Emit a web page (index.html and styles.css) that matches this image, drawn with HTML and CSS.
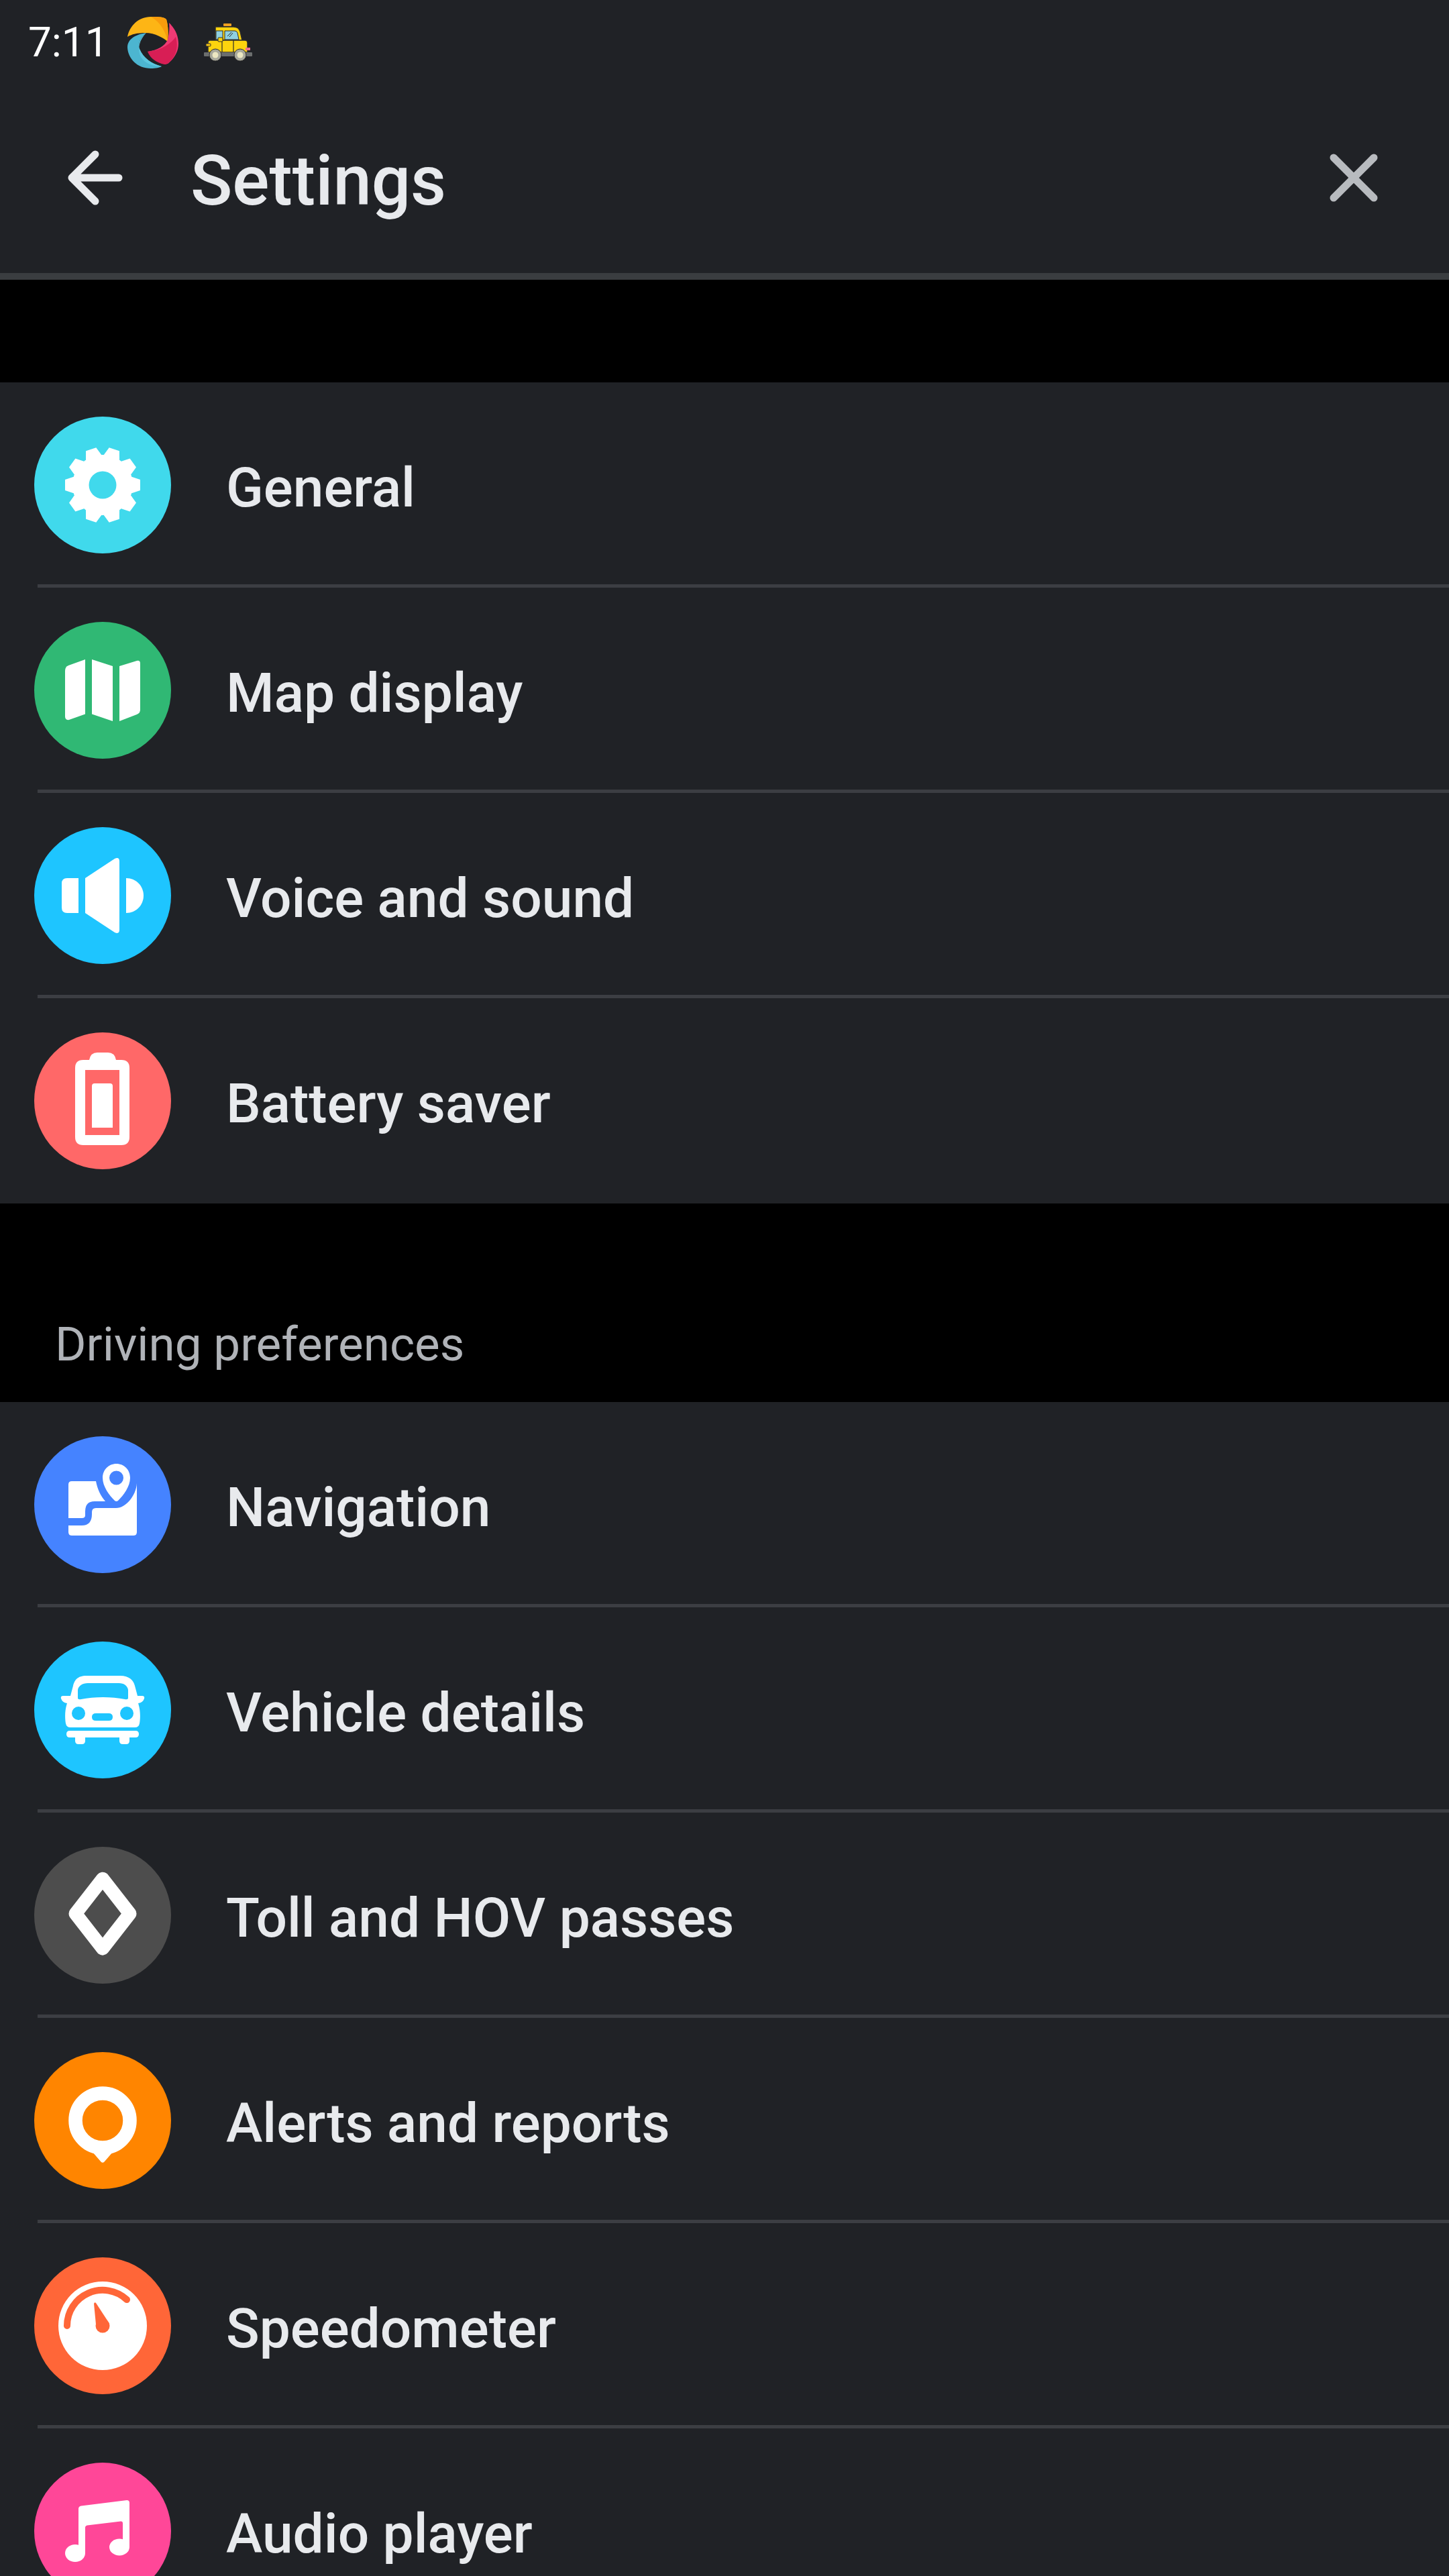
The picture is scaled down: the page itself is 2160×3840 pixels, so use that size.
FILE: index.html
```html
<!DOCTYPE html>
<html lang="en">

<head>
    <meta charset="UTF-8">
    <meta name="viewport" content="width=device-width, initial-scale=1.0">
    <title>Settings</title>
    <link rel="stylesheet" href="styles.css">
</head>

<body>
    <div class="screen">
        <header class="app-header">
            <div class="status-bar">
                <span class="clock">7:11</span>
                <svg class="swirl" viewBox="0 0 76 77">
                    <path fill="#fdb515" d="M0 30C3 14 16 0 35 0C46 0 55 0 58 4C61 14 61 26 60 37C54 32 42 24 26 24C15 24 6 26 0 30Z" />
                    <path fill="#f99c0c" d="M35 0C46 0 55 0 58 4C61 14 61 26 60 37C58 25 50 8 35 0Z" />
                    <path fill="#4cb5d0" d="M28 24C14 26 0 32 0 46C1 62 14 77 35 77C42 77 48 76 51 74C36 70 24 62 18 48C15 39 20 30 28 24Z" />
                    <path fill="#5cc6de" d="M28 24C18 34 14 48 20 60C25 69 38 74 51 74C36 70 24 62 18 48C15 39 20 30 28 24Z" />
                    <path fill="#f03a74" d="M62 9C72 18 76 30 76 40C76 52 70 62 60 70C52 64 40 58 30 52C44 50 56 44 60 34C62 26 63 17 62 9Z" />
                    <path fill="#d81e55" d="M30 52C44 50 60 46 72 30C76 44 74 58 60 70C58 71 56 71 55 71C44 69 34 62 30 52Z" />
                </svg>
                <svg class="taxi" viewBox="0 0 72 56">
                    <rect x="29" y="0" width="12" height="4" rx="1" fill="#f0a020" />
                    <path fill="#fdd40e" stroke="#2c2c2c" stroke-width="1.5" d="M17 5H44Q52 5 54 12L57 25H17Z" />
                    <rect x="18" y="11" width="10" height="13" fill="#8fd0e0" stroke="#2c2c2c" />
                    <path fill="#8fd0e0" stroke="#2c2c2c" d="M31 11H46Q49 11 50 14L52 24H31Z" />
                    <path stroke="#2c2c2c" stroke-width="1" d="M35 19L41 13M38 20L43 14" />
                    <path fill="#fdd40e" stroke="#2c2c2c" stroke-width="1.5" d="M9 25H61Q65 25 65 29V43H6V28Q6 25 9 25Z" />
                    <path stroke="#2c2c2c" stroke-width="1.2" d="M27 25V43M44 25V43" />
                    <rect x="21" y="21" width="7" height="6" rx="1" fill="#fdd40e" stroke="#2c2c2c" />
                    <rect x="3" y="30" width="7" height="4" rx="1" fill="#f6c514" stroke="#2c2c2c" />
                    <rect x="62" y="36" width="7" height="4" fill="#ef6e8d" />
                    <rect x="0" y="43" width="72" height="6" rx="1" fill="#6b6e6e" />
                    <circle cx="17" cy="47" r="9" fill="#a9a99c" stroke="#2c2c2c" />
                    <circle cx="17" cy="47" r="4.5" fill="#ece7c2" />
                    <circle cx="54" cy="47" r="9" fill="#a9a99c" stroke="#2c2c2c" />
                    <circle cx="54" cy="47" r="4.5" fill="#ece7c2" />
                </svg>
            </div>
            <div class="toolbar">
                <svg class="back-icon" viewBox="0 0 82 82">
                    <path d="M76 41H6M41 6L6 41L41 76" />
                </svg>
                <h1 class="title">Settings</h1>
                <svg class="close-icon" viewBox="0 0 72 72">
                    <path d="M6 6L66 66M66 6L6 66" />
                </svg>
            </div>
        </header>

        <section class="group group-first">
            <div class="row">
                <span class="badge badge-general">
                    <svg viewBox="0 0 204 204">
                        <g fill="#fff">
                            <polygon points="46,94 58,90 146,90 158,94 158,110 146,114 58,114 46,110" />
                            <polygon points="46,94 58,90 146,90 158,94 158,110 146,114 58,114 46,110" transform="rotate(36 102 102)" />
                            <polygon points="46,94 58,90 146,90 158,94 158,110 146,114 58,114 46,110" transform="rotate(72 102 102)" />
                            <polygon points="46,94 58,90 146,90 158,94 158,110 146,114 58,114 46,110" transform="rotate(108 102 102)" />
                            <polygon points="46,94 58,90 146,90 158,94 158,110 146,114 58,114 46,110" transform="rotate(144 102 102)" />
                            <circle cx="102" cy="102" r="45" />
                        </g>
                        <circle cx="102" cy="102" r="20.5" fill="#40d9ec" />
                    </svg>
                </span>
                <span class="label">General</span>
            </div>
            <div class="row">
                <span class="badge badge-map">
                    <svg viewBox="0 0 204 204">
                        <g fill="#fff">
                            <path d="M46 73Q46 67 51 65L76 56V137.500L52 146Q46 147 46 141Z" />
                            <path d="M86 56L117 66V148L86 137.500Z" />
                            <path d="M127 66L153 58Q158 57 158 62V131Q158 136 153 138L127 148Z" />
                        </g>
                    </svg>
                </span>
                <span class="label">Map display</span>
            </div>
            <div class="row">
                <span class="badge badge-sound">
                    <svg viewBox="0 0 204 204">
                        <g fill="#fff">
                            <path d="M66 76V128H49Q41 128 41 120V84Q41 76 49 76Z" />
                            <path d="M76 76L120 47Q127 44 127 51V153Q127 160 120 157L76 128Z" />
                            <path d="M137 76C152 76 163 88 163 102C163 116 152 128 137 128Z" />
                        </g>
                    </svg>
                </span>
                <span class="label">Voice and sound</span>
            </div>
            <div class="row">
                <span class="badge badge-battery">
                    <svg viewBox="0 0 204 204">
                        <path fill="#fff" fill-rule="evenodd" d="M82 41Q84 30 94 30H110Q120 30 122 41H130Q142 41 142 53V156Q142 168 130 168H73Q61 168 61 156V53Q61 41 73 41ZM76 56V153H127V56Z" />
                        <path fill="#fff" d="M86 80Q86 76 90 76H113Q117 76 117 80V142H86Z" />
                    </svg>
                </span>
                <span class="label">Battery saver</span>
            </div>
        </section>

        <h2 class="group-title">Driving preferences</h2>

        <section class="group">
            <div class="row">
                <span class="badge badge-nav">
                    <svg viewBox="0 0 204 204">
                        <g fill="#fff">
                            <path d="M56 67H92C94 78 99 89 106 97H90Q76 97 76 112V118Q76 122 71 122H51V72Q51 67 56 67Z" />
                            <path d="M51 133H71Q86 133 86 116V113Q86 107 92 107H122C137 107 152 88 153 70V143Q153 148 148 148H56Q51 148 51 143Z" />
                            <path fill-rule="evenodd" d="M122.500 41C134 41 143 50 143 62C143 75 133 88 125 96Q122.500 98 120 96C112 88 102 75 102 62C102 50 111 41 122.500 41ZM122.500 51.500A10.500 10.500 0 1 0 122.501 72.500A10.500 10.500 0 1 0 122.500 51.500Z" />
                        </g>
                    </svg>
                </span>
                <span class="label">Navigation</span>
            </div>
            <div class="row">
                <span class="badge badge-vehicle">
                    <svg viewBox="0 0 204 204">
                        <path fill="#fff" fill-rule="evenodd" d="M78 51H128C142 51 148 58 150 66L154 81H161Q165 81 164 85Q162 91 155 92C159 104 158 116 157 122Q156 128 150 128H54Q48 128 47 122C46 116 45 104 49 92Q42 91 40 85Q39 81 43 81H54L58 66C60 58 64 51 78 51ZM65 72V84Q65 87 70 86C90 82 115 82 135 86Q140 87 140 84V72C139 66 134 62 126 62H80C72 62 66 66 65 72ZM66 97A10 10 0 1 0 66.010 117A10 10 0 1 0 66 97ZM138 97A10 10 0 1 0 138.010 117A10 10 0 1 0 138 97ZM92 107Q86 107 86 112.500Q86 118 92 118H111Q117 118 117 112.500Q117 107 111 107Z" />
                        <path fill="#fff" d="M53 133H151Q156 133 156 138Q156 143 151 143H142V148Q142 153 137 153H132Q127 153 127 148V143H76V148Q76 153 71 153H66Q61 153 61 148V143H53Q48 143 48 138Q48 133 53 133Z" />
                    </svg>
                </span>
                <span class="label">Vehicle details</span>
            </div>
            <div class="row">
                <span class="badge badge-toll">
                    <svg viewBox="0 0 204 204">
                        <polygon points="102,47.700 142.500,99.700 102,151.700 61.500,99.700" fill="none" stroke="#fff" stroke-width="20" stroke-linejoin="round" />
                    </svg>
                </span>
                <span class="label">Toll and HOV passes</span>
            </div>
            <div class="row">
                <span class="badge badge-alerts">
                    <svg viewBox="0 0 204 204">
                        <circle cx="102" cy="102" r="40.500" fill="none" stroke="#fff" stroke-width="20.500" />
                        <path fill="#fff" d="M86 148L99.500 163.500Q102 166 104.500 163.500L118 148Z" />
                    </svg>
                </span>
                <span class="label">Alerts and reports</span>
            </div>
            <div class="row">
                <span class="badge badge-speed">
                    <svg viewBox="0 0 204 204">
                        <circle cx="102" cy="102" r="66" fill="#fff" />
                        <path d="M49 102A53 53 0 0 1 138 63" fill="none" stroke="#ff6638" stroke-width="10" stroke-linecap="round" />
                        <path fill="#ff6638" d="M89 69Q90 66 92 68L109 94L92 100Z" />
                        <circle cx="102" cy="102" r="10.500" fill="#ff6638" />
                    </svg>
                </span>
                <span class="label">Speedometer</span>
            </div>
            <div class="row">
                <span class="badge badge-audio">
                    <svg viewBox="0 0 204 204">
                        <g fill="#fff">
                            <path d="M66 69Q66 65 70 64.500L138 56Q142 56 142 60V126H132V90Q132 87 129 87.500L79 93.500Q76 94 76 97V135H66Z" />
                            <ellipse cx="127" cy="126" rx="15" ry="12.500" />
                            <ellipse cx="61" cy="135" rx="15" ry="13" />
                        </g>
                    </svg>
                </span>
                <span class="label">Audio player</span>
            </div>
        </section>
    </div>
</body>

</html>
```

FILE: styles.css
```css
body {
    margin: 0;
    background-color: #000000;
    font-family: Roboto, "Noto Sans", sans-serif;
}

.screen {
    width: 2160px;
    height: 3840px;
    overflow: hidden;
}

.app-header {
    background-color: #202226;
    border-bottom: 10px solid #3a3d40;
}

.status-bar {
    display: flex;
    align-items: center;
    height: 126px;
    padding-left: 42px;
    color: #ffffff;
}

.clock {
    width: 148px;
    font-size: 62px;
    line-height: 70px;
}

.swirl {
    width: 76px;
    height: 77px;
}

.taxi {
    width: 72px;
    height: 56px;
    margin-left: 38px;
}

.toolbar {
    display: flex;
    align-items: center;
    height: 278px;
    padding: 0 106px 3px 101px;
}

.back-icon,
.close-icon {
    fill: none;
    stroke-width: 11;
    stroke-linecap: round;
    stroke-linejoin: round;
}

.back-icon {
    width: 82px;
    height: 82px;
    stroke: #e8eaed;
}

.close-icon {
    width: 72px;
    height: 72px;
    stroke: #b8bbbf;
}

.title {
    flex: 1;
    margin: 10px 0 0 101px;
    color: #e8eaed;
    font-size: 103px;
    font-weight: 500;
    line-height: 118px;
}

.group {
    background-color: #202226;
}

.group-first {
    margin-top: 153px;
}

.group-title {
    display: flex;
    align-items: flex-end;
    box-sizing: border-box;
    height: 296px;
    margin: 0;
    padding: 0 0 45px 82px;
    color: #b0b3b8;
    font-size: 71px;
    font-weight: 400;
    line-height: 82px;
}

.row {
    position: relative;
    display: flex;
    align-items: center;
    height: 306px;
    padding-left: 51px;
}

.row::after {
    content: "";
    position: absolute;
    left: 56px;
    right: 0;
    bottom: 0;
    height: 5px;
    background-color: #3c3e43;
}

.row:last-child::after {
    display: none;
}

.badge {
    flex: none;
    width: 204px;
    height: 204px;
    border-radius: 50%;
}

.badge svg {
    display: block;
    width: 204px;
    height: 204px;
}

.badge-general { background-color: #40d9ec; }
.badge-map { background-color: #30b874; }
.badge-sound { background-color: #1ec5ff; }
.badge-battery { background-color: #ff6868; }
.badge-nav { background-color: #4583ff; }
.badge-vehicle { background-color: #1ec5ff; }
.badge-toll { background-color: #4d4d4d; }
.badge-alerts { background-color: #ff8500; }
.badge-speed { background-color: #ff6638; }
.badge-audio { background-color: #ff4798; }

.label {
    margin: 8px 0 0 82px;
    color: #e8eaed;
    font-size: 82px;
    font-weight: 500;
    line-height: 94px;
}
```
